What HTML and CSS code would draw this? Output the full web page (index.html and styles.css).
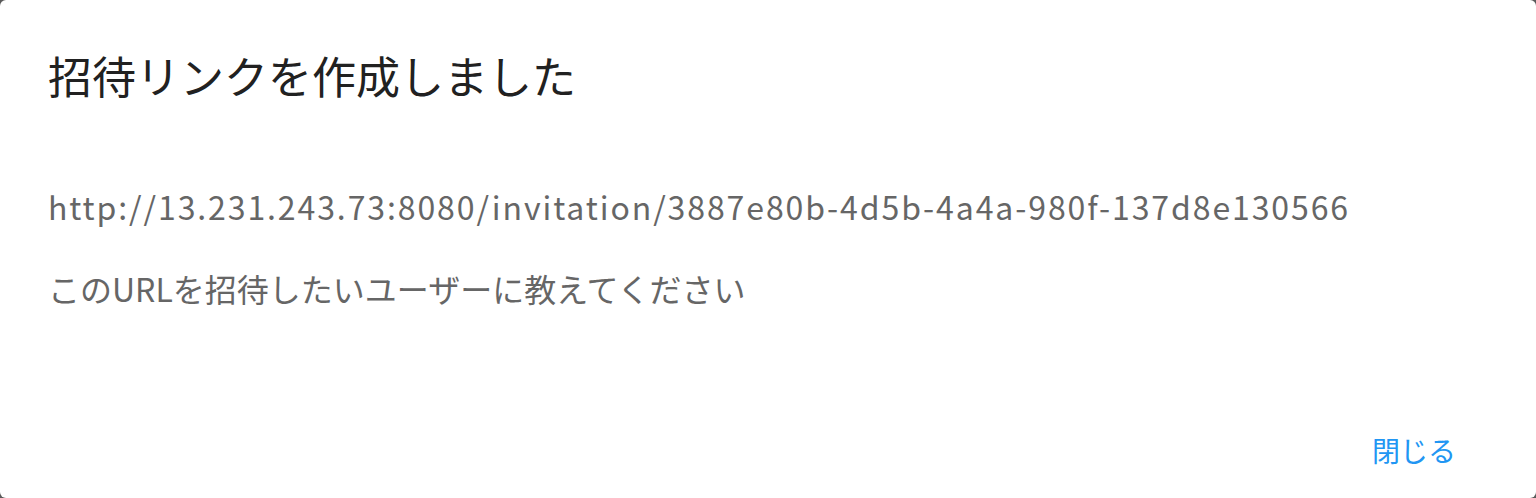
FILE: index.html
```html
<!DOCTYPE html>
<html lang="ja">
<head>
<meta charset="utf-8">
<link rel="stylesheet" href="styles.css">
</head>
<body>
<div class="dialog">
  <h2 class="dialog-title">招待リンクを作成しました</h2>
  <div class="dialog-content">
    <p class="url">http://13.231.243.73:8080/invitation/3887e80b-4d5b-4a4a-980f-137d8e130566</p>
    <p class="note">このURLを招待したいユーザーに教えてください</p>
  </div>
  <div class="dialog-actions">
    <button class="btn-text">閉じる</button>
  </div>
</div>
</body>
</html>
```

FILE: styles.css
```css
html, body {
  margin: 0;
  padding: 0;
  height: 100%;
}
body {
  background: #5a5a5a;
  font-family: "Noto Sans CJK JP", "Noto Sans", sans-serif;
}
.dialog {
  box-sizing: border-box;
  height: 498px;
  background: #fff;
  border-radius: 6px;
  display: flex;
  flex-direction: column;
}
.dialog-title {
  margin: 0;
  padding: 40px 48px 0;
  font-size: 44px;
  line-height: 70px;
  font-weight: 400;
  color: #212121;
}
.dialog-content {
  padding: 0 48px;
  flex: 1;
}
.url, .note {
  margin: 0;
  font-size: 32px;
  line-height: 48px;
  color: #666;
}
.url {
  margin-top: 72px;
  letter-spacing: 1.9px;
}
.note {
  margin-top: 34px;
}
.dialog-actions {
  display: flex;
  justify-content: flex-end;
  padding: 0 64px 24px;
}
.btn-text {
  border: 0;
  background: none;
  font-family: inherit;
  font-size: 28px;
  line-height: 48px;
  padding: 0 16px;
  color: #2196f3;
}
```
